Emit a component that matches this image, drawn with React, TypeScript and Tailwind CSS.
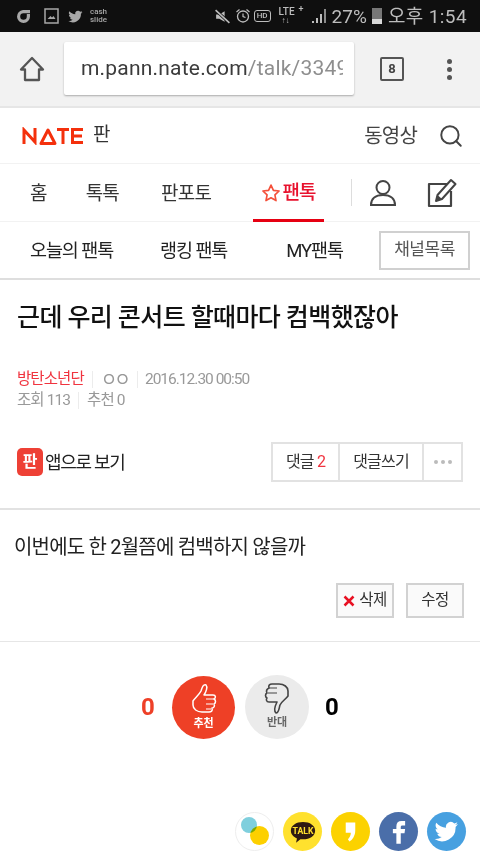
import { Search } from 'lucide-react';

const krFont = "font-['Roboto','Noto_Sans_CJK_KR',sans-serif]";

function StatusBar() {
  return (
    <div className="h-8 bg-[#0f0f0f] flex items-center pl-[15px] pr-[13px] text-[#bdbdbd]">
      <svg width="17" height="17" viewBox="0 0 17 17" className="mr-[12px]">
        <path d="M15 2H8a6.500 6.500 0 1 0 7 6.500V6h-3.200v2.500a3.300 3.300 0 1 1-3.300-3.300H15z" fill="#a8a8a8" />
      </svg>
      <svg width="15" height="16" viewBox="0 0 15 16" className="mr-[8px]">
        <rect x="1" y="1" width="13" height="14" fill="none" stroke="#a8a8a8" strokeWidth="1.500" />
        <path d="M3.500 11l3-3 1.500 1.500 1.500-1.500 2 3z" fill="#a8a8a8" />
      </svg>
      <svg width="17" height="15" viewBox="0 0 24 24" className="mr-[6px]">
        <path d="M23 4.900c-.8.400-1.700.6-2.600.8.900-.6 1.700-1.500 2-2.500-.9.500-1.900.9-2.900 1.100a4.600 4.600 0 0 0-7.900 4.200C7.800 8.300 4.500 6.500 2.200 3.700a4.600 4.600 0 0 0 1.400 6.200c-.7 0-1.400-.2-2.100-.6 0 2.300 1.600 4.200 3.700 4.700-.7.200-1.400.2-2.100.1.600 1.900 2.300 3.200 4.300 3.200A9.300 9.300 0 0 1 .6 19.200 13 13 0 0 0 20.700 7.600c.9-.7 1.700-1.600 2.300-2.700z" fill="#a8a8a8" />
      </svg>
      <div className="text-[8px] leading-[8px] font-['Roboto',sans-serif] text-[#a8a8a8] font-medium">
        <div>cash</div>
        <div>slide</div>
      </div>
      <div className="ml-auto flex items-center">
        <svg width="17" height="17" viewBox="0 0 16 16" className="mr-[4px]">
          <path d="M2 6h3l5-3v10L5 10H2z" fill="#bdbdbd" />
          <path d="M1.500 2l13 12" stroke="#0f0f0f" strokeWidth="3" />
          <path d="M1.500 2l13 12" stroke="#bdbdbd" strokeWidth="1.500" />
        </svg>
        <svg width="16" height="16" viewBox="0 0 16 16" className="mr-[3px]">
          <circle cx="8" cy="8.500" r="5.500" fill="none" stroke="#bdbdbd" strokeWidth="1.300" />
          <path d="M8 5.500v3l2.500 1M1.500 4l3-2.500M14.500 4l-3-2.500" fill="none" stroke="#bdbdbd" strokeWidth="1.200" />
        </svg>
        <div className="w-[17px] h-[12px] border border-[#bdbdbd] rounded-[3px] text-[8px] leading-[10px] text-center font-['Roboto',sans-serif] font-medium mr-[8px]">HD</div>
        <div className="relative w-[26px] h-[18px] text-[10px] leading-[10px] font-['Roboto',sans-serif] font-medium mr-[6px]">
          LTE<span className="absolute top-[-3px] left-[20px] text-[9px]">+</span>
          <span className="absolute left-[3px] top-[10px] text-[8px] leading-[8px]">↑↓</span>
        </div>
        <svg width="16" height="16" viewBox="0 0 16 16" className="mr-[5px]">
          <path d="M1 15h2v-2H1zM5 15h2v-5H5zM9 15h2V6H9z" fill="#bdbdbd" />
          <path d="M13 15h2V1h-2z" fill="#8a8a8a" />
        </svg>
        <span className="text-[19px] leading-none font-['Roboto',sans-serif] mr-[5px]">27%</span>
        <div className="w-[10px] h-[16px] bg-[#777] mr-[6px] flex flex-col justify-end relative">
          <div className="h-[5px] bg-[#d8d8d8]" />
        </div>
        <span className={`text-[19px] tracking-[0.4px] leading-none ${krFont}`}>오후 1:54</span>
      </div>
    </div>
  );
}

function BrowserBar() {
  return (
    <div className="h-[76px] bg-[#f2f2f2] border-b-2 border-[#e6e6e6] flex items-center">
      <div className="w-16 flex justify-center">
        <svg width="26" height="26" viewBox="0 0 26 26">
          <path d="M13 2L2 13.500h4V24h14V13.500h4z" fill="none" stroke="#555" strokeWidth="2.300" strokeLinejoin="round" />
        </svg>
      </div>
      <div className="w-[290px] h-[53px] bg-white rounded-[2px] shadow-[0_1px_2px_rgba(0,0,0,0.3)] mb-[1px] pl-[17px] pr-[11px] flex items-center overflow-hidden whitespace-nowrap font-['Roboto',sans-serif] text-[21px] tracking-[0.2px]">
        <div className="overflow-hidden">
          <span className="text-[#3b3b3b]">m.pann.nate.com</span>
          <span className="text-[#8e8e8e]">/talk/3349</span>
        </div>
      </div>
      <div className="ml-[26px] w-6 h-6 border-2 border-[#555] rounded-[2px] flex items-center justify-center font-['Roboto',sans-serif] font-bold text-[13px] text-[#444]">8</div>
      <div className="ml-[43px] flex flex-col gap-[3px]">
        <div className="w-[5px] h-[5px] rounded-full bg-[#555]" />
        <div className="w-[5px] h-[5px] rounded-full bg-[#555]" />
        <div className="w-[5px] h-[5px] rounded-full bg-[#555]" />
      </div>
    </div>
  );
}

function Header() {
  return (
    <div className="h-[56px] flex items-center pl-[22px] pr-[16px] border-b border-[#f2f2f2]">
      <svg width="62" height="18" viewBox="0 0 62 18">
        <g fill="none" stroke="#f4300c" strokeWidth="3">
          <path d="M2 17V3l11 12V1" />
          <path d="M19 16.500L26 3l7 13.500z" strokeLinejoin="round" />
          <path d="M35 2.500h12M41 2.500V17" />
          <path d="M61 2.500H50.500v13H61M50.500 9H60" />
        </g>
      </svg>
      <span className="ml-[9px] text-[19px] text-[#333]">판</span>
      <span className="ml-auto text-[20px] tracking-[-0.8px] text-[#444]">동영상</span>
      <Search size={26} strokeWidth={1.800} color="#444" className="ml-[21px]" />
    </div>
  );
}

function NavTabs() {
  return (
    <div className="h-[58px] flex items-center border-b border-[#f2f2f2] text-[19px] tracking-[-0.8px] text-[#333]">
      <span className="ml-[30px] pt-[3px]">홈</span>
      <span className="ml-[39px] pt-[3px]">톡톡</span>
      <span className="ml-[42px] pt-[3px]">판포토</span>
      <div className="ml-[42px] w-[71px] h-full pt-[3px] flex items-center justify-center border-b-[3px] border-[#e60012] -mb-px text-[#e8112d] font-medium">
        <svg width="20" height="20" viewBox="0 0 24 24" className="mr-[1px]">
          <path d="M12 2.500l2.900 6.300 6.800.8-5 4.700 1.300 6.800-6-3.400-6 3.400 1.300-6.800-5-4.700 6.800-.8z" fill="none" stroke="#f4503a" strokeWidth="2" strokeLinejoin="round" />
        </svg>
        팬톡
      </div>
      <div className="ml-[27px] w-px h-[27px] bg-[#ddd]" />
      <svg width="28" height="30" viewBox="0 0 28 30" className="ml-[17px]">
        <g fill="none" stroke="#444" strokeWidth="2">
          <circle cx="14" cy="9.500" r="6.500" />
          <path d="M2 27c0-6 4-10 12-10s12 4 12 10z" />
        </g>
      </svg>
      <svg width="32" height="32" viewBox="0 0 32 32" className="ml-[29px]">
        <path d="M22 7H3v22h22V14" fill="none" stroke="#444" strokeWidth="2.200" strokeLinejoin="round" />
        <path d="M10 24l1.500-6L25 3l4.500 4L16 22z" fill="none" stroke="#444" strokeWidth="2" strokeLinejoin="round" />
        <path d="M10 24l1.500-6 4.500 4z" fill="#444" />
      </svg>
    </div>
  );
}

function SubTabs() {
  return (
    <div className="h-[58px] flex items-center border-b-2 border-[#dedede] text-[18.500px] tracking-[-1.100px] text-[#222]">
      <span className="ml-[30px] pt-[3px]">오늘의 팬톡</span>
      <span className="ml-[47px] pt-[3px]">랭킹 팬톡</span>
      <span className="ml-[59px] pt-[3px]">MY팬톡</span>
      <div className="ml-auto mr-[10px] w-[91px] h-[39px] border-2 border-[#d0d0d0] flex items-center justify-center text-[17px] tracking-[-0.5px] text-[#555]">채널목록</div>
    </div>
  );
}

function Sep({ h = 'h-[17px]' }: { h?: string }) {
  return <div className={`w-px ${h} bg-[#ececec]`} />;
}

function Meta() {
  return (
    <div className="pl-[17px] text-[15.500px] tracking-[-0.9px] text-[#999] leading-[21px]">
      <div className="flex items-center whitespace-nowrap">
        <span className="text-[#f0343f]">방탄소년단</span>
        <span className="ml-[8px]"><Sep /></span>
        <span className="ml-[8px] text-[18px] tracking-[-3px]">ㅇㅇ</span>
        <span className="ml-[9px]"><Sep /></span>
        <span className="ml-[7px] tracking-[-1px]">2016.12.30 00:50</span>
      </div>
      <div className="flex items-center whitespace-nowrap">
        <span>조회 113</span>
        <span className="ml-[8px]"><Sep /></span>
        <span className="ml-[8px]">추천 0</span>
      </div>
    </div>
  );
}

function ActionRow() {
  return (
    <div className="mt-[31px] h-[40px] flex items-center pl-[17px] pr-[17px]">
      <div className="w-[26px] h-[28px] rounded-[5px] bg-[#ee4035] flex items-center justify-center text-[16px] font-bold text-white leading-none">판</div>
      <span className="ml-[2px] text-[18px] tracking-[-1.300px] text-[#222]">앱으로 보기</span>
      <div className="ml-auto flex h-[40px] border-2 border-[#e2e2e2] text-[16px] tracking-[-0.8px] text-[#333]">
        <div className="w-[67px] flex items-center justify-center border-r-2 border-[#e2e2e2]">
          댓글&nbsp;<span className="text-[#f0343f]">2</span>
        </div>
        <div className="w-[84px] flex items-center justify-center border-r-2 border-[#e2e2e2]">댓글쓰기</div>
        <div className="w-[37px] flex items-center justify-center gap-[3px]">
          <div className="w-[4px] h-[4px] rounded-full bg-[#bbb]" />
          <div className="w-[4px] h-[4px] rounded-full bg-[#bbb]" />
          <div className="w-[4px] h-[4px] rounded-full bg-[#bbb]" />
        </div>
      </div>
    </div>
  );
}

function EditButtons() {
  return (
    <div className="mt-[21px] flex justify-end gap-[12px] pr-[16px] text-[15.500px] tracking-[-0.6px] text-[#333]">
      <div className="w-[58px] h-[35px] border-2 border-[#d2d2d2] bg-[#fafafa] flex items-center justify-center">
        <svg width="12" height="12" viewBox="0 0 12 12" className="mr-[4px]">
          <path d="M1.500 1.500l9 9M10.500 1.500l-9 9" stroke="#e81123" strokeWidth="2.500" />
        </svg>
        삭제
      </div>
      <div className="w-[58px] h-[35px] border-2 border-[#d2d2d2] bg-[#fafafa] flex items-center justify-center">수정</div>
    </div>
  );
}

function Votes() {
  return (
    <div className="mt-[33px] flex items-center font-['Roboto',sans-serif]">
      <span className="ml-[140px] w-[16px] text-center text-[24px] font-bold text-[#ee4028]">0</span>
      <div className="ml-[16px] w-[63px] h-[63px] rounded-full bg-[#ee4026] flex flex-col items-center">
        <svg width="28" height="35" viewBox="0 0 28 35" className="mt-[6px]">
          <path d="M3 19c2-3 6-6 8-10 1-3 2-7 5-6 2 2 0 7-2 10h9c3 0 3 3 1 4 2 1 2 4 0 5 1 2 0 4-2 4 1 3-1 4-3 4h-7c-5 0-9-3-9-7z" fill="none" stroke="#fff" strokeWidth="1.500" strokeLinejoin="round" />
          <path d="M16 17h8M16 22h7M16 27h5" stroke="#fff" strokeWidth="1.200" />
        </svg>
        <span className={`text-[11px] leading-[13px] font-bold text-white ${krFont}`}>추천</span>
      </div>
      <div className="ml-[10px] w-[64px] h-[64px] rounded-full bg-[#ebebeb] flex flex-col items-center">
        <svg width="28" height="36" viewBox="0 0 28 36" className="mt-[5px]">
          <path d="M25 16c-2 3-6 5-8 9-1 3-1 8-4 8-2-2-1-7 1-11H6c-3 0-3-3-2-4-2-1-2-4 0-5-1-2 0-4 2-5-1-3 1-4 3-4h7c5 0 9 3 9 7z" fill="none" stroke="#444" strokeWidth="1.600" strokeLinejoin="round" />
          <path d="M6 8h8M5 13h9" stroke="#444" strokeWidth="1.200" />
        </svg>
        <span className={`text-[11px] leading-[13px] font-bold text-[#666] ${krFont}`}>반대</span>
      </div>
      <span className="ml-[15px] w-[16px] text-center text-[24px] font-bold text-black">0</span>
    </div>
  );
}

function ShareIcons() {
  return (
    <div className="mt-[73px] flex justify-end gap-[9px] pr-[14px] items-center">
      <div className="w-[39px] h-[39px] rounded-full border border-[#eee] bg-white relative">
        <div className="absolute left-[5px] top-[4px] w-[16px] h-[16px] rounded-full bg-[#7fcfdd]" />
        <div className="absolute left-[14px] top-[13px] w-[19px] h-[19px] rounded-full bg-[#fdd000] mix-blend-multiply" />
      </div>
      <div className="w-[39px] h-[39px] rounded-full bg-[#ffe12e] flex items-center justify-center">
        <svg width="26" height="25" viewBox="0 0 30 28">
          <path d="M15 3C7 3 1 7 1 13c0 4 3 7 7 9l-1 5 5-4h3c8 0 14-4 14-10S23 3 15 3z" fill="#2e1a12" />
          <text x="15" y="17" textAnchor="middle" fontSize="10" fontWeight="700" fill="#ffe12e" fontFamily="Roboto, sans-serif">TALK</text>
        </svg>
      </div>
      <div className="w-[39px] h-[39px] rounded-full bg-[#fcd200] flex items-center justify-center">
        <svg width="11" height="26" viewBox="0 0 15 28">
          <path d="M1 1h13v11c0 7-4 13-8 15l-2-3c2-2 4-5 4-9H1z" fill="#fff" />
        </svg>
      </div>
      <div className="w-[39px] h-[39px] rounded-full bg-[#4a6ea9] flex items-center justify-center">
        <svg width="14" height="26" viewBox="0 0 16 27">
          <path d="M5 27V15H1v-5h4V7c0-4 2-6 6-6h4v5h-3c-1.500 0-2 .7-2 2v2h5l-.7 5H10v12z" fill="#fff" />
        </svg>
      </div>
      <div className="w-[39px] h-[39px] rounded-full bg-[#47a0e0] flex items-center justify-center">
        <svg width="25" height="25" viewBox="0 0 24 24">
          <path d="M23 4.900c-.8.400-1.700.6-2.600.8.900-.6 1.700-1.500 2-2.500-.9.500-1.900.9-2.900 1.100a4.600 4.600 0 0 0-7.900 4.200C7.800 8.300 4.500 6.500 2.200 3.700a4.600 4.600 0 0 0 1.400 6.200c-.7 0-1.400-.2-2.100-.6 0 2.300 1.600 4.200 3.700 4.700-.7.200-1.400.2-2.100.1.600 1.900 2.300 3.200 4.300 3.200A9.300 9.300 0 0 1 .6 19.200 13 13 0 0 0 20.700 7.600c.9-.7 1.700-1.600 2.300-2.700z" fill="#fff" />
        </svg>
      </div>
    </div>
  );
}

export default function App() {
  return (
    <div className={`w-[480px] h-[853px] overflow-hidden bg-white ${krFont}`}>
      <StatusBar />
      <BrowserBar />
      <Header />
      <NavTabs />
      <SubTabs />
      <h1 className="mt-[20px] pl-[17px] text-[25px] leading-[36px] font-medium tracking-[-0.6px] text-[#111]">근데 우리 콘서트 할때마다 컴백했잖아</h1>
      <div className="mt-[33px]"><Meta /></div>
      <ActionRow />
      <div className="mt-[26px] h-[2px] bg-[#e2e2e2]" />
      <p className="mt-[22px] pl-[14px] text-[20px] leading-[30px] tracking-[-0.8px] text-[#222]">이번에도 한 2월쯤에 컴백하지 않을까</p>
      <EditButtons />
      <div className="mt-[23px] h-px bg-[#e6e6e6]" />
      <Votes />
      <ShareIcons />
    </div>
  );
}
